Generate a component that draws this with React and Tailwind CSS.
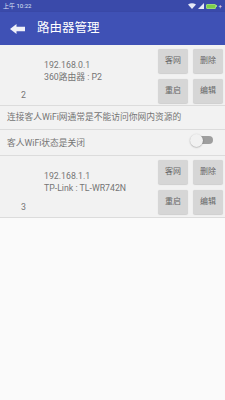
import React from "react";

const font = { fontFamily: "Roboto, 'Noto Sans CJK SC', 'Noto Sans', sans-serif" };

function Btn({ children }) {
  return (
    <div className="h-[24px] w-[30px] rounded-[2px] bg-[#d6d6d6] flex items-center justify-center text-[8px] text-[#666] shadow-[0_0.5px_1px_rgba(0,0,0,0.15)]">
      {children}
    </div>
  );
}

function Card({ ip, name, num, h }) {
  return (
    <div className={`flex ${h} border-b border-[#dcdcdc] bg-[#f2f2f2]`}>
      <div className="flex-1 flex flex-col pt-[14px] pb-[4px]">
        <div className="pl-[44px] text-[8.75px] leading-[12px] text-[#757575]">
          <div>{ip}</div>
          <div>{name}</div>
        </div>
        <div className="mt-auto pl-[21px] text-[8.75px] leading-[12px] text-[#757575]">{num}</div>
      </div>
      <div className="pt-[4px] pr-[2px]">
        <div className="grid grid-cols-[30px_30px] gap-x-[5px] gap-y-[6px]">
          <Btn>客网</Btn>
          <Btn>删除</Btn>
          <Btn>重启</Btn>
          <Btn>编辑</Btn>
        </div>
      </div>
    </div>
  );
}

export default function App() {
  return (
    <div className="w-[225px] h-[400px] bg-[#fafafa] flex flex-col overflow-hidden" style={font}>
      {/* status bar */}
      <div className="h-[12px] bg-[#3a4aaa] flex items-center justify-between pl-[3px] pr-[3px]">
        <span className="text-[6px] leading-none text-[#dfe3f5]">上午 10:22</span>
        <div className="flex items-center gap-[2px]">
          <svg width="8" height="6" viewBox="0 0 8 6">
            <path d="M0 1.5 Q4 -1 8 1.5 L4 6 Z" fill="#e6e9f7" />
          </svg>
          <svg width="6" height="6" viewBox="0 0 6 6">
            <path d="M6 0 L6 6 L0 6 Z" fill="#e6e9f7" />
          </svg>
          <div className="flex items-center">
            <div className="w-[10px] h-[5px] bg-[#7bd04a] rounded-[1px] border border-[#9ad87a]" />
            <div className="w-[1px] h-[2px] bg-[#9ad87a]" />
          </div>
          <span className="text-[6px] leading-none text-[#e6e9f7]">+</span>
        </div>
      </div>
      {/* toolbar */}
      <div className="h-[33px] bg-[#3f51b5] flex items-center shadow-[0_1px_2px_rgba(0,0,0,0.25)]">
        <svg className="ml-[10px]" width="15" height="10" viewBox="0 0 15 10">
          <path d="M0 5 L6.5 0 L6.5 2.8 L15 2.8 L15 7.2 L6.5 7.2 L6.5 10 Z" fill="#eef0f8" />
        </svg>
        <span className="ml-[12px] text-[12.5px] leading-none text-white">路由器管理</span>
      </div>
      {/* list */}
      <Card ip="192.168.0.1" name="360路由器 : P2" num="2" h="h-[61px]" />
      <div className="h-[24px] flex items-center pl-[7px] border-b border-[#dcdcdc] bg-[#f2f2f2] text-[8.75px] text-[#757575]">
        连接客人WiFi网通常是不能访问你网内资源的
      </div>
      <div className="h-[26px] flex items-center justify-between pl-[7px] pr-[12px] border-b border-[#dcdcdc] bg-[#f2f2f2]">
        <span className="text-[8.75px] text-[#757575] pt-[2px]">客人WiFi状态是关闭</span>
        <div className="relative w-[23px] h-[13px] flex items-center -mt-[5px]">
          <div className="ml-[4px] w-[19px] h-[8px] rounded-full bg-[#9e9e9e]" />
          <div className="absolute left-0 top-0 w-[13px] h-[13px] rounded-full bg-[#f1f1f1] shadow-[0_0.5px_1.5px_rgba(0,0,0,0.35)]" />
        </div>
      </div>
      <Card ip="192.168.1.1" name="TP-Link : TL-WR742N" num="3" h="h-[62px]" />
    </div>
  );
}
